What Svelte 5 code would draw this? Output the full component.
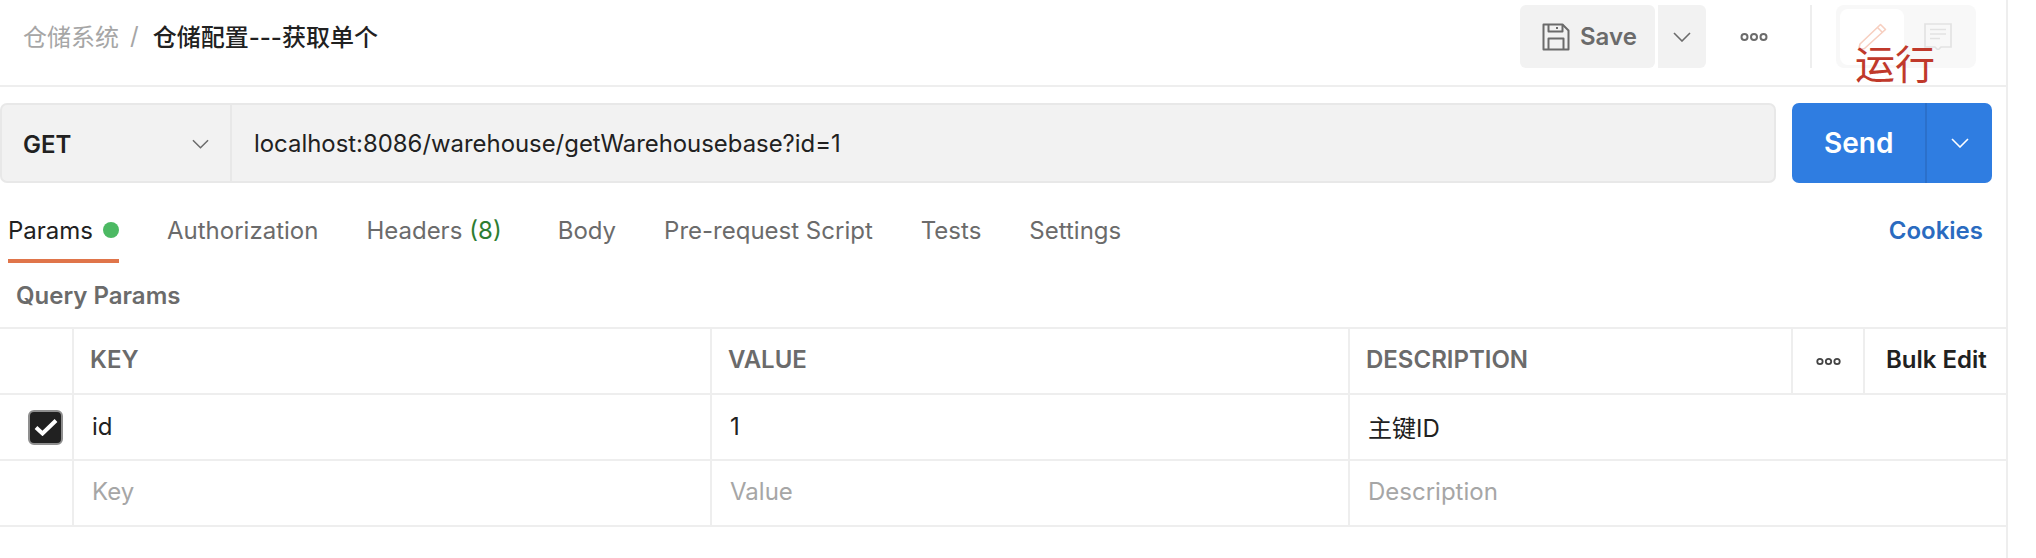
<script>
	const tabs = [
		{ name: 'Params', active: true, dot: true },
		{ name: 'Authorization' },
		{ name: 'Headers', count: '(8)' },
		{ name: 'Body' },
		{ name: 'Pre-request Script' },
		{ name: 'Tests' },
		{ name: 'Settings' }
	];
</script>

{#snippet chevron(cls)}
	<svg class={cls} viewBox="0 0 18 10" fill="none" stroke="currentColor" stroke-width="1.6">
		<path d="M1 1l8 8 8-8" />
	</svg>
{/snippet}

{#snippet dots(cls)}
	<svg class={cls} viewBox="0 0 28 10" fill="none" stroke="currentColor" stroke-width="2">
		<circle cx="4.5" cy="5" r="3" />
		<circle cx="14" cy="5" r="3" />
		<circle cx="23.5" cy="5" r="3" />
	</svg>
{/snippet}

<div class="pane">
	<header class="top">
		<div class="crumbs">
			<span class="parent">仓储系统</span>
			<span class="slash">/</span>
			<span class="current">仓储配置---获取单个</span>
		</div>
		<div class="actions">
			<button class="save">
				<svg class="floppy" viewBox="0 0 28 28" fill="none" stroke="currentColor" stroke-width="2" stroke-linejoin="round">
					<path d="M1.5 1.5h19l6 6v19h-25z" />
					<path d="M6.5 1.5v7h14v-7M15 4v2" />
					<path d="M6.5 26.5V15.5h15v11" />
				</svg>
				Save
			</button>
			<button class="save-more">{@render chevron('chev-save')}</button>
			{@render dots('top-dots')}
			<span class="sep"></span>
			<div class="mode">
				<span class="mode-btn on">
					<svg class="pencil" viewBox="0 0 30 28" fill="none" stroke="currentColor" stroke-width="1.6" stroke-linejoin="round">
						<path d="M23.5 1.5l5 5L7.5 25.5l-6 1.5 1.5-6z" />
						<path d="M20.5 4.5l5 5" />
					</svg>
				</span>
				<span class="mode-btn">
					<svg class="comment" viewBox="0 0 28 27" fill="none" stroke="currentColor" stroke-width="1.6">
						<path d="M1 1h26v23H17l-3 3-3-3H1z" />
						<path d="M6 6.5h16M6 11h16M6 15.5h10" />
					</svg>
				</span>
			</div>
			<span class="note">运行</span>
		</div>
	</header>

	<div class="url-row">
		<div class="url-box">
			<div class="method">
				<span>GET</span>
				{@render chevron('chev-method')}
			</div>
			<div class="url">localhost:8086/warehouse/getWarehousebase?id=1</div>
		</div>
		<div class="send">
			<span class="send-label">Send</span>
			<span class="send-more">{@render chevron('chev-send')}</span>
		</div>
	</div>

	<nav class="tabs">
		{#each tabs as tab}
			<div class="tab" class:active={tab.active} class:has-count={tab.count}>
				{tab.name}
				{#if tab.count}<span class="count">{tab.count}</span>{/if}
				{#if tab.dot}<span class="dot"></span>{/if}
			</div>
		{/each}
		<div class="cookies">Cookies</div>
	</nav>

	<div class="section-title">Query Params</div>

	<div class="table">
		<div class="row head">
			<div class="cell check"></div>
			<div class="cell">KEY</div>
			<div class="cell">VALUE</div>
			<div class="cell desc-head">
				<span class="desc-label">DESCRIPTION</span>
				<span class="head-dots">{@render dots('table-dots')}</span>
				<span class="bulk">Bulk Edit</span>
			</div>
		</div>
		<div class="row">
			<div class="cell check">
				<span class="box">
					<svg viewBox="0 0 24 18" fill="none" stroke="#fff" stroke-width="4">
						<path d="M2 9.5l6.5 6L22 2.5" />
					</svg>
				</span>
			</div>
			<div class="cell val">id</div>
			<div class="cell val">1</div>
			<div class="cell val">主键ID</div>
		</div>
		<div class="row">
			<div class="cell check"></div>
			<div class="cell val ph">Key</div>
			<div class="cell val ph">Value</div>
			<div class="cell val ph">Description</div>
		</div>
	</div>
</div>

<style>
	:global(body) {
		margin: 0;
		background: #fff;
	}

	.pane {
		box-sizing: border-box;
		width: 2008px;
		height: 558px;
		border-right: 2px solid #eee;
		font-family: Inter, 'Noto Sans CJK SC', sans-serif;
		font-size: 24px;
		color: #212121;
	}

	.top {
		display: flex;
		align-items: flex-start;
		justify-content: space-between;
		height: 85px;
		border-bottom: 2px solid #eee;
	}

	.crumbs {
		display: flex;
		align-items: center;
		height: 71px;
		padding-left: 23px;
	}

	.parent {
		color: #a6a6a6;
	}

	.slash {
		margin: 0 14px 0 11px;
		color: #a6a6a6;
	}

	.current {
		color: #212121;
		font-weight: 500;
	}

	.actions {
		position: relative;
		display: flex;
		align-items: center;
		height: 63px;
		margin-top: 5px;
		margin-right: 30px;
	}

	button {
		border: 0;
		height: 63px;
		background: #f2f2f2;
		color: #6b6b6b;
		font: inherit;
	}

	.save {
		display: flex;
		align-items: center;
		gap: 10px;
		width: 135px;
		padding: 0 0 0 22px;
		border-radius: 6px;
		font-weight: 600;
		font-size: 24px;
	}

	.floppy {
		width: 28px;
		height: 28px;
	}

	.save-more {
		display: flex;
		align-items: center;
		justify-content: center;
		width: 48px;
		margin-left: 3px;
		border-radius: 0 6px 6px 0;
		padding: 0;
	}

	.chev-save {
		width: 18px;
		height: 10px;
	}

	.top-dots {
		width: 28px;
		height: 10px;
		margin-left: 34px;
		color: #6b6b6b;
	}

	.sep {
		width: 2px;
		height: 63px;
		margin: 0 24px 0 42px;
		background: #eee;
	}

	.mode {
		display: flex;
		align-items: center;
		gap: 20px;
		box-sizing: border-box;
		width: 140px;
		height: 63px;
		padding: 0 4px;
		border-radius: 8px;
		background: #f8f8f8;
	}

	.mode-btn {
		display: flex;
		align-items: center;
		justify-content: center;
		width: 64px;
		height: 56px;
		border-radius: 8px;
	}

	.mode-btn + .mode-btn {
		width: 28px;
	}

	.on {
		background: #fff;
	}

	.pencil {
		width: 30px;
		height: 28px;
		color: #f7cfc0;
	}

	.comment {
		flex: none;
		width: 28px;
		height: 27px;
		color: #e2e2e2;
	}

	.note {
		position: absolute;
		left: 335px;
		top: 36px;
		font-size: 40px;
		line-height: 48px;
		color: #c0392b;
	}

	.url-row {
		display: flex;
		gap: 16px;
		margin-top: 16px;
	}

	.url-box {
		display: flex;
		box-sizing: border-box;
		width: 1776px;
		height: 80px;
		border: 2px solid #e8e8e8;
		border-radius: 7px;
		background: #f2f2f2;
	}

	.method {
		display: flex;
		align-items: center;
		justify-content: space-between;
		box-sizing: border-box;
		width: 230px;
		height: 78px;
		padding: 0 21px;
		border-right: 2px solid #e8e8e8;
		font-weight: 600;
		font-size: 24px;
	}

	.chev-method {
		width: 17px;
		height: 10px;
		color: #6b6b6b;
	}

	.url {
		display: flex;
		align-items: center;
		padding-left: 22px;
		font-size: 23.9px;
	}

	.send {
		display: flex;
		width: 200px;
		height: 80px;
		border-radius: 7px;
		background: #2f7de1;
		color: #fff;
		font-weight: 600;
		font-size: 28px;
	}

	.send-label {
		display: flex;
		align-items: center;
		box-sizing: border-box;
		width: 135px;
		padding-left: 32px;
		border-right: 2px solid #2b70cb;
	}

	.send-more {
		display: flex;
		flex: 1;
		align-items: center;
		justify-content: center;
	}

	.chev-send {
		width: 18px;
		height: 10px;
	}

	.tabs {
		display: flex;
		align-items: stretch;
		gap: 48px;
		height: 80px;
		padding-left: 8px;
	}

	.tab {
		display: flex;
		align-items: center;
		gap: 10px;
		box-sizing: border-box;
		height: 80px;
		padding-top: 18px;
		color: #6b6b6b;
		white-space: nowrap;
		border-bottom: 4px solid transparent;
	}

	.tab.active {
		color: #212121;
		border-bottom-color: #e0754a;
	}

	.has-count {
		gap: 7px;
		margin-right: 8px;
	}

	.count {
		color: #2e7d32;
	}

	.dot {
		width: 16px;
		height: 16px;
		border-radius: 50%;
		background: #4cb963;
	}

	.cookies {
		display: flex;
		align-items: center;
		height: 76px;
		margin-left: auto;
		margin-right: 23px;
		padding-top: 18px;
		box-sizing: border-box;
		color: #2a6bc0;
		font-weight: 600;
	}

	.section-title {
		display: flex;
		align-items: center;
		box-sizing: border-box;
		height: 64px;
		padding-left: 16px;
		color: #6b6b6b;
		font-weight: 600;
	}

	.table {
		border-top: 2px solid #eee;
	}

	.row {
		display: grid;
		grid-template-columns: 72px 638px 638px 1fr;
		height: 66px;
		box-sizing: border-box;
		border-bottom: 2px solid #eee;
	}

	.cell {
		display: flex;
		align-items: center;
		box-sizing: border-box;
		padding-left: 16px;
		padding-bottom: 3px;
		border-left: 2px solid #eee;
		font-weight: 600;
		font-size: 24px;
		color: #6b6b6b;
	}

	.cell.check {
		border-left: 0;
		padding-left: 28px;
		padding-bottom: 0;
	}

	.cell.val {
		padding-left: 18px;
		padding-bottom: 2px;
		font-weight: 400;
		color: #212121;
	}

	.cell.ph {
		padding-bottom: 3px;
		color: #a6a6a6;
	}

	.desc-head {
		padding-left: 0;
		padding-bottom: 0;
	}

	.desc-label {
		flex: 1;
		padding-left: 16px;
		padding-bottom: 3px;
	}

	.head-dots {
		display: flex;
		align-items: center;
		justify-content: center;
		box-sizing: border-box;
		width: 74px;
		height: 100%;
		border-left: 2px solid #eee;
		border-right: 2px solid #eee;
	}

	.table-dots {
		width: 27px;
		height: 9px;
		color: #444;
	}

	.bulk {
		width: 141px;
		box-sizing: border-box;
		padding-left: 21px;
		padding-bottom: 3px;
		color: #212121;
		white-space: nowrap;
	}

	.box {
		display: flex;
		align-items: center;
		justify-content: center;
		box-sizing: border-box;
		width: 35px;
		height: 35px;
		border: 2px solid #8f8f8f;
		border-radius: 6px;
		background: #212121;
	}

	.box svg {
		width: 24px;
		height: 18px;
	}
</style>
